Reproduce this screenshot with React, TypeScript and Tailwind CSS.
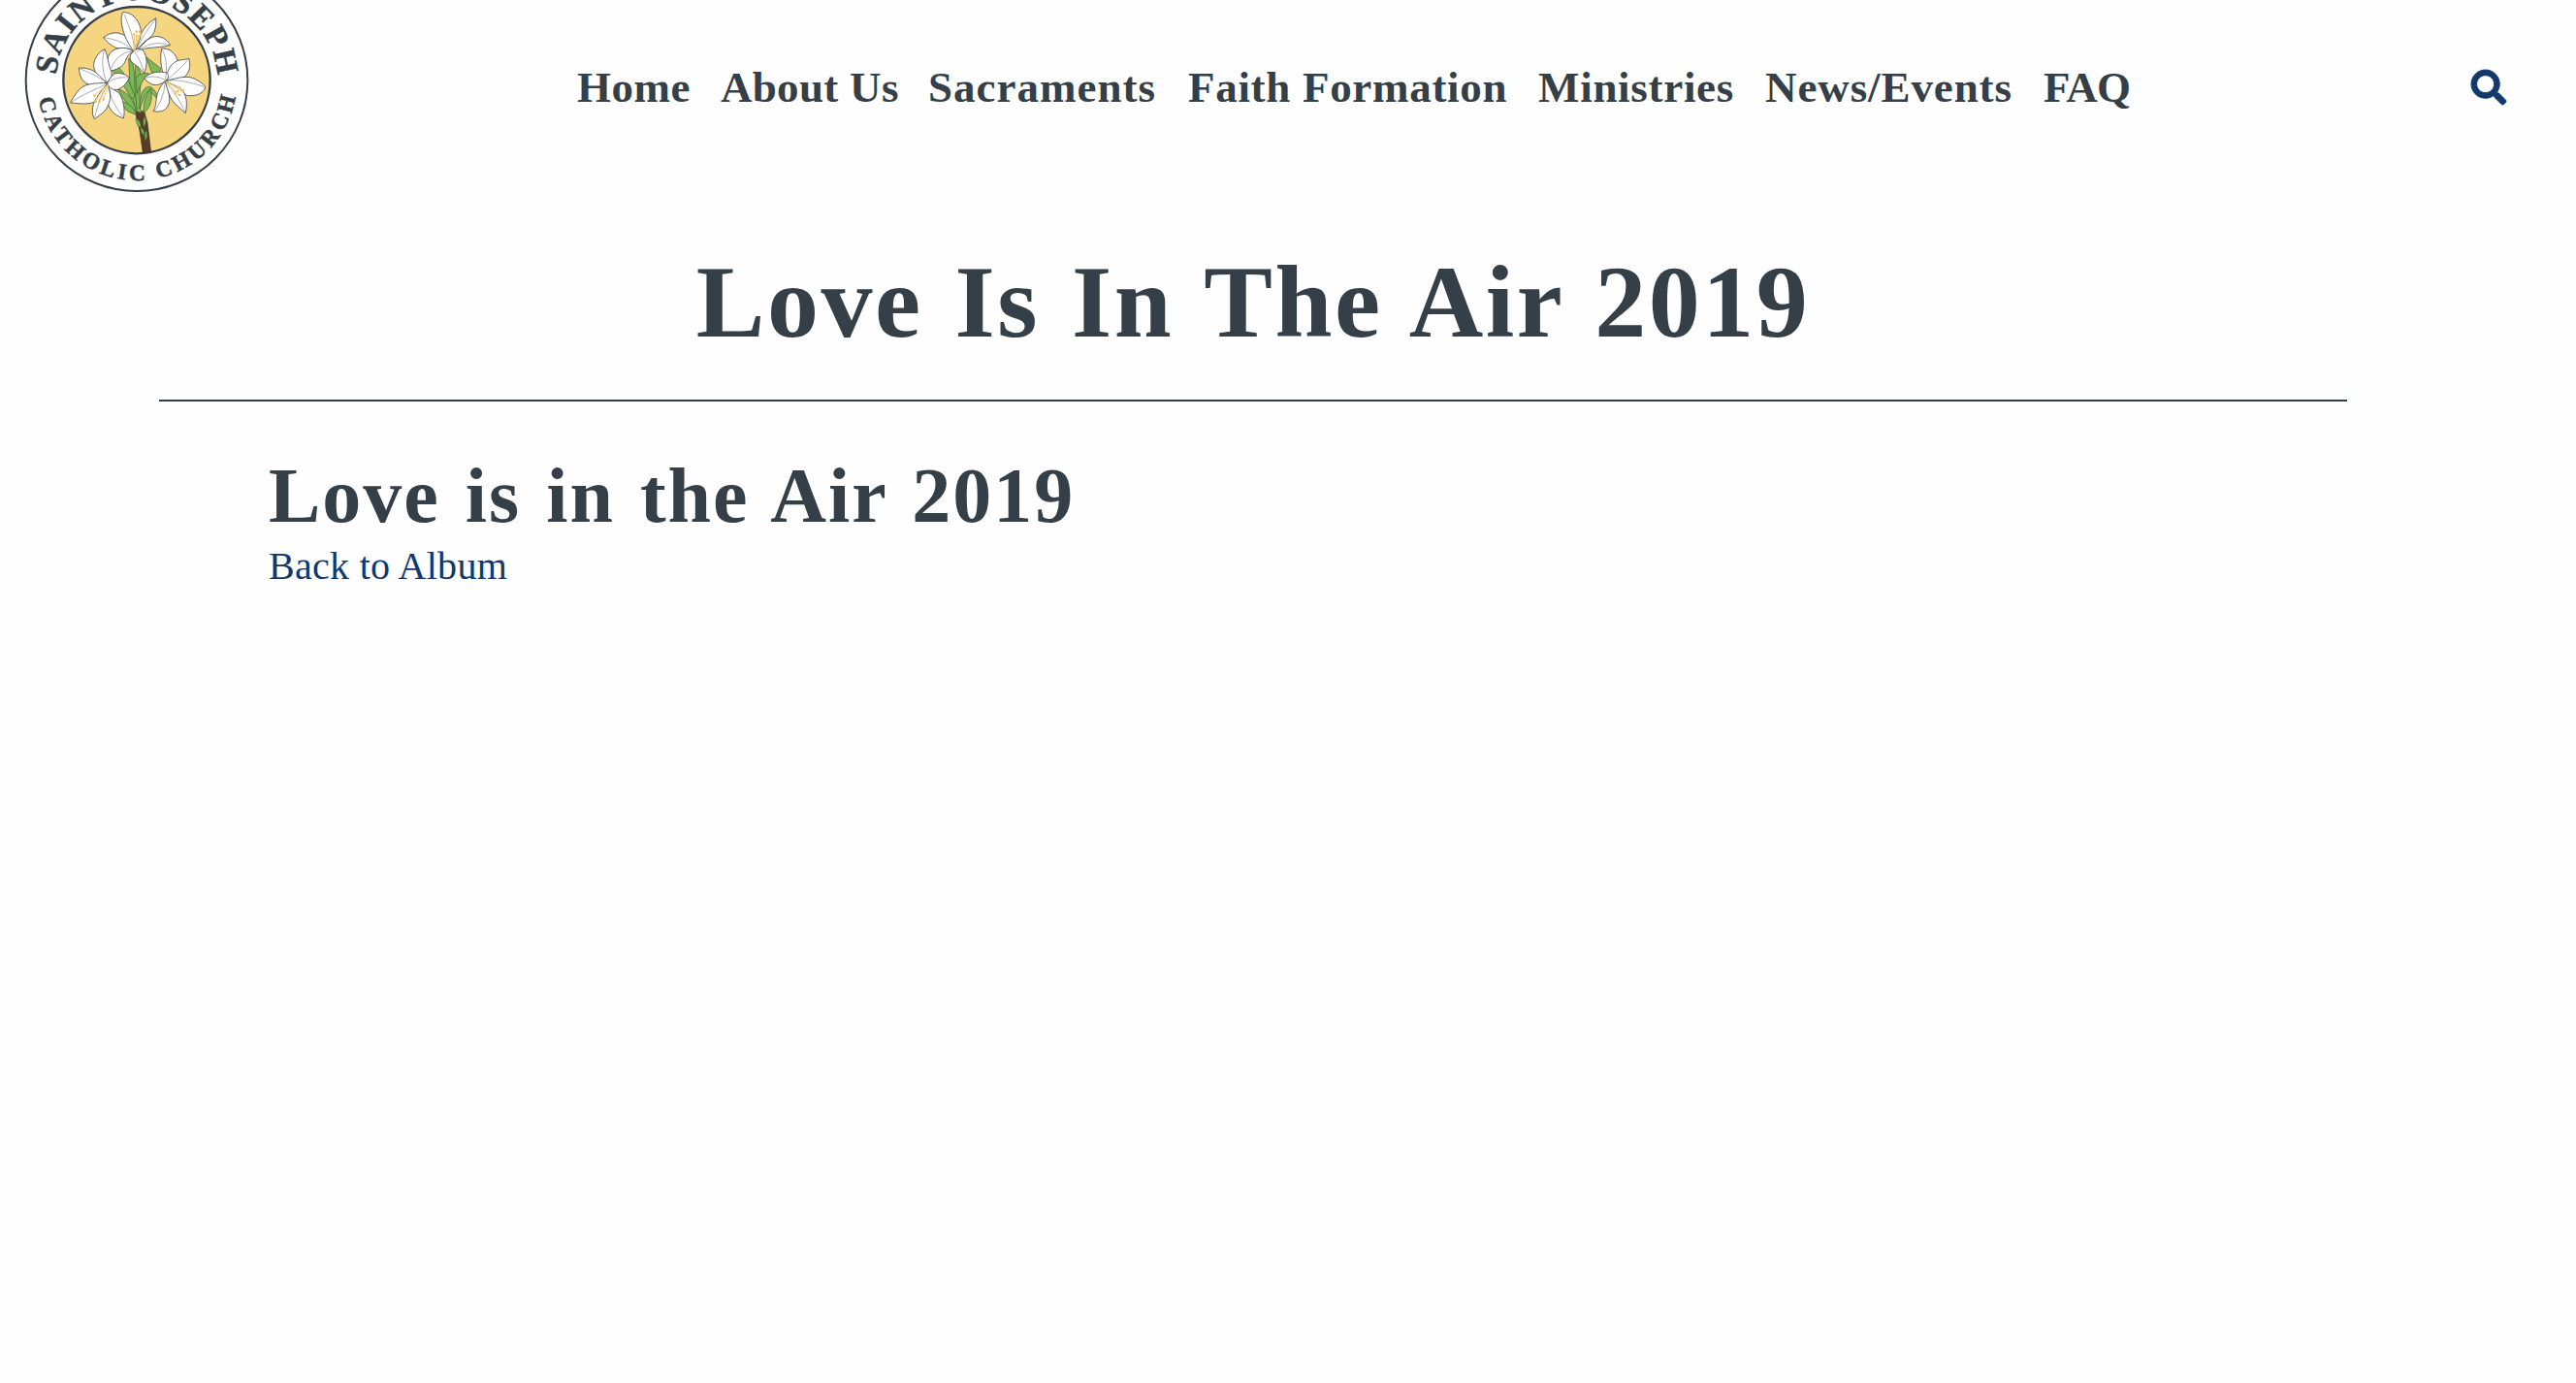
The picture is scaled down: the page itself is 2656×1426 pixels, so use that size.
import React from "react";
import { FaSearch } from "react-icons/fa";

const navLinks = [
   { title: "Home", className: "w-[148px] tracking-[0.5px]" },
   { title: "About Us", className: "w-[214px] tracking-[0.3px]" },
   { title: "Sacraments", className: "w-[268px] tracking-[1px]" },
   { title: "Faith Formation", className: "w-[361px] tracking-[0.7px]" },
   { title: "Ministries", className: "w-[234px] tracking-[0.7px]" },
   { title: "News/Events", className: "w-[287px] tracking-[0.9px]" },
   { title: "FAQ", className: "tracking-[-0.8px]" },
];

const leaves = [
   "M398 180 L412 200 L420 262 L428 330 L418 340 L402 262 Z",
   "M420 190 L437 232 L432 300 L436 350 L424 345 L416 260 Z",
   "M452 176 L498 212 L490 232 L470 226 Z",
   "M346 216 L366 206 L396 244 L418 300 L408 306 L380 262 Z",
   "M366 276 C392 282 412 306 422 345 C402 330 376 306 366 276 Z",
   "M376 314 C398 318 416 334 422 354 C400 350 380 338 376 314 Z",
   "M420 240 C434 226 450 224 462 228 C438 246 432 270 424 290 Z",
   "M432 336 C432 292 444 266 464 268 C480 276 486 292 486 308 C474 286 456 276 448 296 Z",
   "M444 350 C442 312 454 290 466 274 C474 304 466 334 444 350 Z",
];

const petals = [
   // Top flower
   "M412 158 C396 144 364 154 356 146 C338 138 326 124 320 116 C344 96 372 98 390 114 C402 124 410 140 412 158 Z",
   "M412 158 C390 142 350 146 338 168 C328 188 332 206 338 220 C362 216 382 206 388 188 C392 174 402 164 412 158 Z",
   "M424 160 C456 142 474 152 526 140 C520 122 494 108 474 114 C450 122 438 142 424 160 Z",
   "M420 158 C428 130 432 86 482 56 C484 84 478 106 462 118 C446 128 434 142 420 158 Z",
   "M414 158 C386 126 366 64 380 38 C404 36 428 56 436 92 C440 118 424 140 414 158 Z",
   "M414 158 C396 172 398 190 424 204 C434 214 442 222 446 226 C456 202 456 176 444 158 C434 148 420 150 414 158 Z",
   // Left flower
   "M330 256 C298 238 278 208 298 176 C306 162 316 156 324 152 C334 172 332 192 346 226 C346 240 338 248 330 256 Z",
   "M330 256 C310 240 302 222 276 214 C264 210 252 210 244 210 C246 234 252 250 270 260 C292 268 312 260 330 256 Z",
   "M332 256 C300 258 266 256 246 276 C232 292 222 308 218 318 C246 320 276 326 298 312 C316 298 326 278 332 256 Z",
   "M332 262 C322 300 334 334 352 350 C364 360 376 364 382 366 C388 342 382 302 366 286 C350 276 342 268 332 262 Z",
   "M332 258 C304 294 286 312 286 344 C286 356 290 366 292 368 C312 354 334 342 340 308 C344 288 338 272 332 258 Z",
   "M332 256 C342 240 350 224 368 226 C384 228 394 234 400 240 C392 260 376 274 360 278 C344 278 336 268 332 256 Z",
   // Right flower
   "M512 250 C498 216 494 180 500 150 C526 148 544 166 550 190 C550 216 532 234 512 250 Z",
   "M514 250 C514 218 532 190 556 186 C572 184 582 182 584 180 C590 204 588 222 570 238 C550 252 530 248 514 250 Z",
   "M514 250 C538 244 570 234 592 240 C612 246 626 258 636 268 C630 288 610 298 580 296 C554 284 534 266 514 250 Z",
   "M510 252 C484 278 484 304 482 322 C480 334 474 344 474 344 C494 348 514 344 522 322 C528 300 520 270 510 252 Z",
   "M512 252 C518 280 526 304 540 320 C554 332 566 344 574 350 C580 320 578 292 560 276 C544 264 526 258 512 252 Z",
   "M512 250 C498 262 484 264 472 262 C460 256 450 248 446 242 C462 226 480 220 512 224 C526 230 522 242 512 250 Z",
];

const creases = [
   "M320 116 C356 122 382 128 410 156",
   "M344 212 C354 184 376 162 410 158",
   "M384 44 C400 82 414 118 416 156",
   "M480 60 C456 92 436 120 422 156",
   "M524 140 C482 126 452 138 424 160",
   "M416 160 C430 180 440 200 444 220",
   "M322 156 C312 194 320 230 330 254",
   "M246 212 C278 224 302 238 330 254",
   "M222 316 C256 290 294 280 330 258",
   "M380 362 C356 330 338 296 334 264",
   "M292 364 C302 324 316 290 332 260",
   "M398 240 C370 238 350 242 334 256",
   "M502 154 C520 190 514 226 512 248",
   "M582 184 C562 208 536 232 514 250",
   "M632 268 C592 256 552 244 514 250",
   "M478 342 C500 316 508 282 511 254",
   "M572 346 C556 310 532 274 512 252",
   "M448 242 C470 234 494 236 510 248",
];

const stamens = [
   "M416 160 L424 104 M416 158 L432 108 M414 154 L416 108 M418 150 L436 98",
   "M334 262 L306 310 M336 262 L294 292 M336 264 L318 308 M334 264 L296 308",
   "M514 254 L554 294 M512 252 L560 276 M514 254 L542 290 M514 252 L566 284",
];

const anthers = [
   [414, 106], [422, 98], [432, 98], [436, 108], [424, 112], [292, 296], [300, 304],
   [308, 314], [320, 308], [296, 314], [554, 270], [566, 280], [556, 294], [542, 290], [550, 282],
];

function Logo() {
   return (
      <svg viewBox="0 0 840 630" className="w-[280px] h-[210px] shrink-0 text-[#353f48]">
         <defs>
            <path id="arc-top" d="M 174 249 A 249 249 0 0 1 672 249" />
            <path id="arc-bottom" d="M 114 249 A 309 309 0 0 0 732 249" />
         </defs>
         <circle cx="423" cy="248" r="343" fill="#fff" stroke="currentColor" strokeWidth="6" />
         <circle cx="423" cy="248" r="227" fill="#f5d57f" stroke="currentColor" strokeWidth="7" />

         {/* Ring lettering */}
         <g
            fill="currentColor"
            stroke="currentColor"
            strokeWidth="1.5"
            fontFamily="'Liberation Serif', serif"
            fontWeight="700"
         >
            <text fontSize="98">
               <textPath href="#arc-top" startOffset="17" textLength="750">SAINT JOSEPH</textPath>
            </text>
            <text fontSize="70">
               <textPath href="#arc-bottom" startOffset="57" textLength="862">CATHOLIC CHURCH</textPath>
            </text>
         </g>

         {/* Stem */}
         <path d="M418 346 L446 344 L456 380 L467 470 L442 473 L432 404 Z" fill="#5b3a26" stroke="#33302a" strokeWidth="2" />
         <path
            d="M420 366 Q436 372 436 396 Q420 388 420 366 Z M448 358 Q456 376 446 394 Q438 378 448 358 Z M434 392 Q448 400 446 420 Q434 410 434 392 Z M452 402 Q460 420 450 436 Q444 420 452 402 Z"
            fill="#7db857" stroke="#37582f" strokeWidth="1.5"
         />
         <g fill="#7db857" stroke="#37582f" strokeWidth="2">
            {leaves.map((d) => <path key={d} d={d} />)}
         </g>

         {/* Lilies */}
         <g fill="#fff" stroke="#3f474e" strokeWidth="2.5" strokeLinejoin="round">
            {petals.map((d) => <path key={d} d={d} />)}
         </g>
         <g fill="none" stroke="#50575d" strokeWidth="1.5">
            {creases.map((d) => <path key={d} d={d} />)}
         </g>
         <g fill="none" stroke="#f2c765" strokeWidth="3">
            {stamens.map((d) => <path key={d} d={d} />)}
         </g>
         <g fill="#f0c05a">
            {anthers.map(([x, y]) => <circle key={`${x}-${y}`} cx={x} cy={y} r="4" />)}
         </g>
      </svg>
   );
}

function Header() {
   return (
      <header className="flex items-start h-[210px]">
         <Logo />
         <nav className="ml-[315px] pt-[64px]">
            <ul className="flex text-[45px] leading-[52px] font-bold whitespace-nowrap">
               {navLinks.map(({ title, className }) => (
                  <li key={title} className={className}>
                     <a href="#">{title}</a>
                  </li>
               ))}
            </ul>
         </nav>
         <button aria-label="Search" className="ml-auto mr-[72px] mt-[72px] text-[#12396b]">
            <FaSearch size={36} stroke="currentColor" strokeWidth={14} className="overflow-visible" />
         </button>
      </header>
   );
}

function App() {
   return (
      <div className="min-h-screen bg-[#fefefe] text-[#353f48] font-['Liberation_Serif',serif]">
         <Header />
         <main className="w-[2256px] ml-[164px]">
            {/* Page title */}
            <div className="h-[204px] pt-[42px] border-b-2 border-[#353f48]">
               <h1 className="text-[106px] leading-[120px] font-bold text-center tracking-[2.5px] [word-spacing:4px]">
                  Love Is In The Air 2019
               </h1>
            </div>

            {/* Album */}
            <section className="pl-[113px] pt-[51px]">
               <h2 className="text-[80px] leading-[92px] font-bold tracking-[2px] [word-spacing:4px]">
                  Love is in the Air 2019
               </h2>
               <a href="#" className="block pt-[3px] text-[40px] leading-[48px] tracking-[0.3px] text-[#12396b]">
                  Back to Album
               </a>
            </section>
         </main>
      </div>
   );
}

export default App;
